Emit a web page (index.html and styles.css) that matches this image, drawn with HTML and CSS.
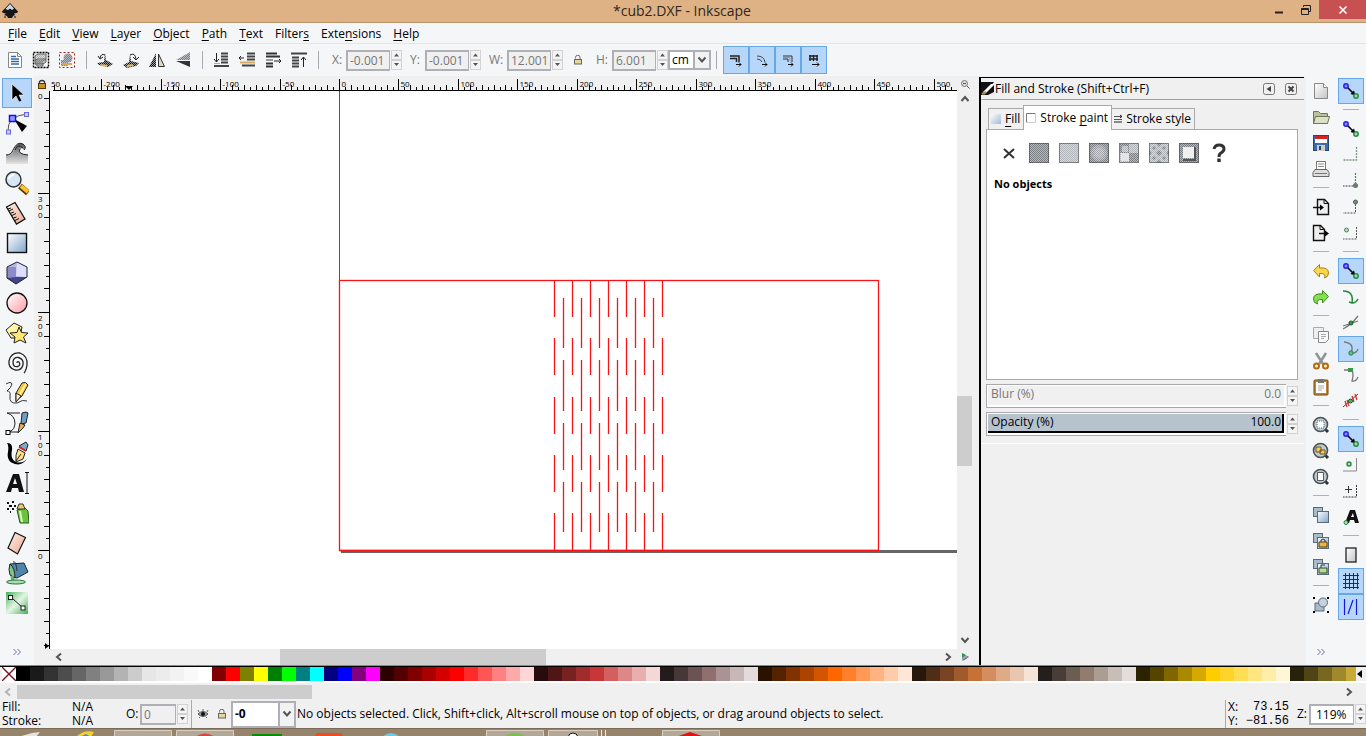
FILE: index.html
```html
<!DOCTYPE html>
<html lang="en">
<head>
<meta charset="utf-8">
<title>*cub2.DXF - Inkscape</title>
<link rel="stylesheet" href="styles.css">
</head>
<body>
<svg class="defs" aria-hidden="true">
  <defs>
    <linearGradient id="gBlue" x1="0" y1="0" x2="1" y2="1"><stop offset="0" stop-color="#fff"/><stop offset="1" stop-color="#7fa5cc"/></linearGradient>
    <linearGradient id="gPink" x1="0" y1="0" x2="1" y2="1"><stop offset="0" stop-color="#fff"/><stop offset="1" stop-color="#ff9ba5"/></linearGradient>
    <linearGradient id="gPeach" x1="0" y1="0" x2="1" y2="1"><stop offset="0" stop-color="#fff0ea"/><stop offset="1" stop-color="#eba98f"/></linearGradient>
    <linearGradient id="gGreen" x1="0" y1="0" x2="1" y2="1"><stop offset="0" stop-color="#46b05a"/><stop offset=".5" stop-color="#e4f5e6"/><stop offset="1" stop-color="#46b05a"/></linearGradient>
    <linearGradient id="gGray" x1="0" y1="0" x2="0" y2="1"><stop offset="0" stop-color="#555"/><stop offset="1" stop-color="#e4e4e4"/></linearGradient>
    <linearGradient id="gPage" x1="0" y1="0" x2="1" y2="1"><stop offset="0" stop-color="#fff"/><stop offset="1" stop-color="#c4c4c4"/></linearGradient>
    <pattern id="dither" width="2" height="2" patternUnits="userSpaceOnUse"><rect width="2" height="2" fill="#b4b9be"/><rect width="1" height="1" fill="#7c8085"/><rect x="1" y="1" width="1" height="1" fill="#7c8085"/></pattern>
    <pattern id="ditherLight" width="2" height="2" patternUnits="userSpaceOnUse"><rect width="2" height="2" fill="#dadada"/><rect width="1" height="1" fill="#b0b4b8"/><rect x="1" y="1" width="1" height="1" fill="#b0b4b8"/></pattern>
    <pattern id="bars" width="2" height="2" patternUnits="userSpaceOnUse"><rect width="2" height="2" fill="#999"/><rect width="1" height="1" fill="#111"/><rect x="1" y="1" width="1" height="1" fill="#222"/></pattern>
    <symbol id="nodes" viewBox="0 0 18 18"><path d="M5 5l7 7" stroke="#000" stroke-width="1.6"/><path d="M13.500 13.500l-5-1.500 3.500-3.500z"/><circle cx="4" cy="4" r="2.200" fill="#8c8cff" stroke="#2222ee" stroke-width="1.500"/><circle cx="14" cy="14" r="2.200" fill="#9fd8b4" stroke="#2c8a44" stroke-width="1.500"/></symbol>
    <symbol id="lens" viewBox="0 0 18 18"><path d="M12 12l4 4" stroke="#333" stroke-width="3"/><circle cx="8.500" cy="8.500" r="7" fill="#bccbd6" stroke="#4b5257" stroke-width="1.600"/></symbol>
    <symbol id="padlock" viewBox="0 0 10 10"><path d="M2.500 3.500V2.500a2 2 0 0 1 4.500 0V5" fill="none" stroke="#666"/><rect x="1.500" y="4.500" width="7" height="4.500" fill="#e6d79a" stroke="#666"/></symbol>
    <symbol id="spin" viewBox="0 0 11 20"><rect x=".5" y=".5" width="10" height="9" fill="#f4f4f4" stroke="#d2d2d2"/><rect x=".5" y="10.500" width="10" height="9" fill="#f4f4f4" stroke="#d2d2d2"/><path d="M3 6.500h5L5.500 3.500zM3 13h5l-2.500 3z" fill="#555"/></symbol>
    <symbol id="clones" viewBox="0 0 18 18"><rect x="1.500" y="1.500" width="9" height="9" fill="#a9bccb" stroke="#596a78"/><rect x="5.500" y="5.500" width="11" height="11" fill="url(#gBlue)" stroke="#596a78"/></symbol>
    <symbol id="stroked" viewBox="0 0 14 14"><path d="M1 3h9v6M1 5.500h6.500V9" fill="none" stroke="#222" stroke-width="1.500"/><path d="M7 11.500h5M10 9.500l2 2-2 2" fill="none" stroke="#111"/></symbol>
  </defs>
</svg>
<div class="window">
  <header class="titlebar">
    <svg class="logo" width="18" height="18" viewBox="0 0 18 18"><path d="M9 1L17 9.500Q17 11 13 11.500L14 13l-2 1-1 2H7l-1-2-3-1 2-1.500Q1 11 1 9.500z" fill="#15171c"/><path d="M9 2l4 4.500-2 1.500-2-1.500L7 8 4.500 7z" fill="#cfd9e6"/><path d="M3 15h2M13 15h2" stroke="#111"/></svg>
    <h1>*cub2.DXF - Inkscape</h1>
    <div class="winctl">
      <button aria-label="Minimize"><svg width="10" height="10"><path d="M1 7.500h8" stroke="#222" stroke-width="2"/></svg></button>
      <button aria-label="Restore"><svg width="12" height="12"><path d="M3.500 3V1.500h7v6H9M1.500 4.500h7v6h-7zM1.500 5.500h7" fill="none" stroke="#222"/></svg></button>
      <button class="close" aria-label="Close"><svg width="10" height="10"><path d="M1.500 1.500l7 7M8.500 1.500l-7 7" stroke="#fff" stroke-width="1.600"/></svg></button>
    </div>
  </header>
  <nav class="menubar">
    <a href="#"><u>F</u>ile</a><a href="#"><u>E</u>dit</a><a href="#"><u>V</u>iew</a><a href="#"><u>L</u>ayer</a><a href="#"><u>O</u>bject</a><a href="#"><u>P</u>ath</a><a href="#"><u>T</u>ext</a><a href="#">Filter<u>s</u></a><a href="#">Exte<u>n</u>sions</a><a href="#"><u>H</u>elp</a>
  </nav>
  <div class="toolbar">
    <div class="group">
      <button aria-label="Select all"><svg width="18" height="18"><path d="M2.500 1.500h9l4 4v11h-13z" fill="#fff" stroke="#888"/><path d="M5 5.500h5M5 8h8M5 10.500h8M5 13h8" stroke="#3568a8" stroke-width="1.500"/><path d="M11.500 1.500v4h4" fill="none" stroke="#888"/></svg></button>
      <button aria-label="Select all in all layers"><svg width="18" height="18"><rect x="1.500" y="1.500" width="15" height="15" fill="none" stroke="#000" stroke-width="1.400" stroke-dasharray="2 1"/><path d="M3 5l3-2h8v5l-3 2H3zM3 9l3-1h8v3l-3 2H3zM3 12h8v3H5z" fill="url(#ditherLight)" stroke="#666"/></svg></button>
      <button aria-label="Deselect"><svg width="18" height="18"><rect x="1.500" y="1.500" width="15" height="15" fill="none" stroke="#a02020" stroke-dasharray="2 2"/><circle cx="10" cy="7" r="4.500" fill="url(#dither)"/><path d="M3 9h7v6H3z" fill="url(#dither)"/><path d="M4 13h10" stroke="#dca850" stroke-width="2"/></svg></button>
    </div><i class="sep"></i>
    <div class="group">
      <button aria-label="Rotate left"><svg width="18" height="18"><path d="M9 2l1 7 7 4-5 3-9-2-2-2 7-1z" fill="url(#bars)"/><path d="M5 14l6 1" stroke="#dfba60" stroke-width="2"/><path d="M9 4Q5 2 4 7M2 5l2 3 3-2" fill="none" stroke="#222"/></svg></button>
      <button aria-label="Rotate right"><svg width="18" height="18"><path d="M8 3l1 7 8 2-3 3-9 2-4-3 6-3z" fill="url(#bars)"/><path d="M5 15l6-1" stroke="#dfba60" stroke-width="2"/><path d="M8 4q5-3 6 4m-3-2l3 3 3-3" fill="none" stroke="#222"/></svg></button>
      <button aria-label="Flip horizontal"><svg width="18" height="18"><path d="M8 2v14H1z" fill="url(#bars)"/><path d="M10.500 3v12.500h6z" fill="#e4d8bc" stroke="#333"/></svg></button>
      <button aria-label="Flip vertical"><svg width="18" height="18"><path d="M16 1v8H2z" fill="url(#dither)"/><path d="M16 16v-6H2z" fill="#333"/></svg></button>
    </div><i class="sep"></i>
    <div class="group">
      <button aria-label="Lower to bottom"><svg width="18" height="18"><path d="M9 2.500h7M9 5.500h7M9 8.500h7M9 11.500h7M2 15h15" stroke="#444" stroke-width="2"/><path d="M2 12.500h6" stroke="#aaa"/><path d="M4.500 2v9m-2.500-3l2.500 3 2.500-3" fill="none" stroke="#222"/></svg></button>
      <button aria-label="Lower"><svg width="18" height="18"><path d="M9 2.500h8M9 5.500h8M4 14.500h13M9 8.500h8" stroke="#444" stroke-width="2"/><path d="M2 11.500h15" stroke="#dba85c" stroke-width="2"/><path d="M6 7H1l2-2M1 7l2 2" fill="none" stroke="#222"/></svg></button>
      <button aria-label="Raise"><svg width="18" height="18"><path d="M2 2.500h11M2 5.500h14M2 12.500h7M2 15.500h7" stroke="#333" stroke-width="2"/><path d="M2 9h7" stroke="#999" stroke-width="2"/><path d="M10 10h7m-2-2l2 2-2 2" fill="none" stroke="#222"/></svg></button>
      <button aria-label="Raise to top"><svg width="18" height="18"><path d="M1 2.500h16M2 6.500h7M2 9.500h7M2 12.500h7M2 15.500h7" stroke="#444" stroke-width="2"/><path d="M13.500 16V6M11 9l2.500-3L16 9" fill="none" stroke="#222"/></svg></button>
    </div><i class="sep"></i>
    <div class="fields">
      <div class="field"><label for="fx">X:</label><input id="fx" value="-0.001" disabled><svg width="11" height="20"><use href="#spin"/></svg></div>
      <div class="field"><label for="fy">Y:</label><input id="fy" value="-0.001" disabled><svg width="11" height="20"><use href="#spin"/></svg></div>
      <div class="field"><label for="fw">W:</label><input id="fw" value="12.001" disabled><svg width="11" height="20"><use href="#spin"/></svg></div>
      <button class="lock" aria-label="Lock ratio"><svg width="10" height="10"><use href="#padlock"/></svg></button>
      <div class="field"><label for="fh">H:</label><input id="fh" value="6.001" disabled><svg width="11" height="20"><use href="#spin"/></svg></div>
    </div>
    <div class="select unit"><select aria-label="Unit"><option>cm</option></select><span class="arrow"><svg width="10" height="8"><path d="M1.500 1.500L5 5.500l3.500-4" fill="none" stroke="#555" stroke-width="2"/></svg></span></div>
    <i class="sep tight"></i>
    <div class="toggles">
      <button aria-label="Scale stroke width"><svg width="14" height="14"><use href="#stroked"/></svg></button>
      <button aria-label="Scale corners"><svg width="14" height="14"><path d="M2 3q7 0 8 6M2 6q4 0 5 3" fill="none" stroke="#444"/><path d="M7 11.500h5M10 9.500l2 2-2 2" fill="none" stroke="#111"/></svg></button>
      <button aria-label="Move gradients"><svg width="14" height="14"><path d="M2 3h9v6M2 6h5v3" fill="none" stroke="#333"/><path d="M2 4.500h7v4" fill="none" stroke="#999"/><path d="M7 11.500h5M10 9.500l2 2-2 2" fill="none" stroke="#111"/></svg></button>
      <button aria-label="Move patterns"><svg width="14" height="14"><path d="M2 3h9M2 6h9M3 2v6M6.500 2v6M10 2v6" stroke="#222" stroke-width="1.400"/><path d="M5 11.500h7M10 9.500l2 2-2 2" fill="none" stroke="#111"/></svg></button>
    </div>
  </div>

  <main class="work">
    <div class="toolbox">
      <button class="on" aria-label="Select"><svg width="24" height="24"><path d="M7 3v16l4-4 3 6 3-1-3-6h5z" stroke="#fff" stroke-width=".6"/></svg></button>
      <button aria-label="Edit nodes"><svg width="24" height="24"><path d="M3 20Q2 5 22 3" fill="none" stroke="#555"/><path d="M9 8l13 7-5 6z"/><rect x="4.500" y="4.500" width="6" height="6" fill="#99f" stroke="#11e" stroke-width="1.500"/><rect x="19.500" y="1.500" width="4" height="4" fill="#ccf" stroke="#66d"/><rect x="1.500" y="19" width="4" height="4" fill="#ccf" stroke="#66d"/></svg></button>
      <button aria-label="Tweak"><svg width="24" height="24"><path d="M1 14q6 0 8-5 3-9 9-6 4 3 1 6-1-3-4-1-3 5 8 6v9H1z" fill="url(#gGray)"/><path d="M1 14q5 0 7-5 4-9 10-6 4 3 1 6M15 8q-3 5 8 6M10 9q3-7 8-2" fill="none" stroke="#222"/></svg></button>
      <button aria-label="Zoom"><svg width="24" height="24"><path d="M15 15l8 7" stroke="#573600" stroke-width="6"/><path d="M16 15l7 6" stroke="#ffc32c" stroke-width="4"/><circle cx="8.500" cy="8.500" r="7.500" fill="#d6e6f5" stroke="#333" stroke-width="1.500"/><path d="M4 8q1-4 5-4" stroke="#fff" stroke-width="2" fill="none"/></svg></button>
      <button aria-label="Measure"><svg width="24" height="24"><path d="M1.500 6L10 1.500 20 18l-8.500 5z" fill="url(#gPeach)" stroke="#111" stroke-width="1.300"/><path d="M3 8l3-1M4 10l4-2M6 12l3-1M7 14.500l4-2M8.500 17l3-1M10 19.500l4-2" stroke="#111"/></svg></button>
      <button aria-label="Rectangle"><svg width="24" height="24"><rect x="2.500" y="2.500" width="19" height="19" fill="url(#gBlue)" stroke="#111" stroke-width="1.400"/></svg></button>
      <button aria-label="3D box"><svg width="24" height="24"><path d="M2 6l10-5 10 5v10l-11 7-9-6z" fill="#b7b7e8"/><path d="M2 6l9 0v17l-9-6z" fill="#8c8ccc"/><path d="M11 16l11 0-11 7-9-6z" fill="#434390"/><path d="M12 1l10 5v10l-11-1z" fill="#dedefa"/><path d="M2 6l10-5 10 5v10l-11 7-9-6z" fill="none" stroke="#223"/></svg></button>
      <button aria-label="Ellipse"><svg width="24" height="24"><circle cx="12" cy="12" r="10" fill="url(#gPink)" stroke="#111" stroke-width="1.300"/></svg></button>
      <button aria-label="Star"><svg width="24" height="24"><path d="M1 9l8-7 8 4-2 11H6z" fill="#fff4a8" stroke="#222"/><path d="M14 6l2.500 5.500L23 12l-4.500 4L21 22l-6-3-6 3 1-6-5-4 7-.5z" fill="#ffe873" stroke="#222"/></svg></button>
      <button aria-label="Spiral"><svg width="24" height="24"><path d="M12 12q0-2 2-1 2 3-1 4.500-5 1-5-4Q8 6 13.500 6.500 19 8 18 14q-2 6-8 5Q3 17 4 10 6 1 15 2q8 3 7 12-1 6-3 8" fill="none" stroke="#222" stroke-width="1.300"/></svg></button>
      <button aria-label="Pencil"><svg width="24" height="24"><path d="M1 3q5-3 6 0-1 4-5 7 4 0 3 5-1 8 7 7 6-4 10-2" fill="none" stroke="#333"/><path d="M11 20l0-8 6-10q4-2 6 2l-6 11z" fill="#ffc735" stroke="#222"/><path d="M11 12l5 3-5 6z" fill="#fff1cf" stroke="#222"/><path d="M15 13l6-10" stroke="#fff2a6" stroke-width="2"/></svg></button>
      <button aria-label="Bezier"><svg width="24" height="24"><path d="M2 2h13M2 2q8 2 8 11 0 5-5 8h8" fill="none" stroke="#222"/><rect x="1" y="19.500" width="4" height="4" fill="#fff" stroke="#000"/><path d="M17 2q5-2 6 0l-2 10-5 1z" fill="#6d9fc4" stroke="#222"/><path d="M15 12l5 2-2 3-5 5z" fill="#e8b050" stroke="#222"/></svg></button>
      <button aria-label="Calligraphy"><svg width="24" height="24"><path d="M2 2q6 0 5 7-2 9 4 12 6 2 11-3-5 7-12 5Q1 21 3 11 4 4 2 2z"/><path d="M14 5l7-4 2 3-2 6z" fill="#7fa9c8" stroke="#222"/><path d="M14 6l7 4" stroke="#d22" stroke-width="2"/><path d="M13 8l7 4-2 6-7 3q-1-7 2-13z" fill="#ffe08a" stroke="#222"/><path d="M11 20l5-7" stroke="#222"/></svg></button>
      <button aria-label="Text"><svg width="24" height="24"><path d="M1 21L8 3h6l5 18h-5l-1-4H7l-1 4zM8 13h4l-2-6z" fill="#111" fill-rule="evenodd"/><path d="M20 1.500h4M20 22.500h4M22 2v20" stroke="#111"/></svg></button>
      <button aria-label="Spray"><svg width="24" height="24"><path d="M12 9l8-2 3 3 1 12-9 0z" fill="#6cc13e" stroke="#2c5520"/><path d="M15 10l2 11" stroke="#d4ffc0" stroke-width="2"/><path d="M12 8l2-5h4l2 5z" fill="#e9cc68" stroke="#333"/><path d="M2 2h2M7 1h2M4 5h3M9 5h2M2 8h2M7 8h2M5 11h1" stroke="#111" stroke-width="2"/></svg></button>
      <button aria-label="Eraser"><svg width="24" height="24"><path d="M10 1.500l10.500 5L12.500 23 3 17z" fill="url(#gPeach)" stroke="#111" stroke-width="1.200"/></svg></button>
      <button aria-label="Fill bucket"><svg width="24" height="24"><path d="M5 3l14-1 4 9-11 6-5-1z" fill="#4f86b0" stroke="#222"/><path d="M5 3q5 4 5 14L5 14q-2-6 0-11z" fill="#7fc48a" stroke="#222"/><path d="M8 1q3-2 4 9" fill="none" stroke="#333"/><path d="M7 15q0 4 2 5" stroke="#64b070" stroke-width="3" fill="none"/><ellipse cx="11" cy="21" rx="9.500" ry="2" fill="#a5dfae" stroke="#2c7039"/></svg></button>
      <button aria-label="Gradient"><svg width="24" height="24"><rect x="1" y="1" width="22" height="22" fill="url(#gGreen)"/><path d="M7 7l11 10" stroke="#222"/><rect x="3.500" y="4.500" width="4" height="4" fill="#fff" stroke="#222"/><rect x="16" y="15" width="4" height="4" fill="#fff" stroke="#222"/></svg></button>
      <button class="more" aria-label="More tools"><svg width="10" height="8"><path d="M1.500 1l3 3-3 3M5.500 1l3 3-3 3" fill="none" stroke="#6c6cb0"/></svg></button>
    </div>

    <section class="editor">
      <div class="corner"><svg width="10" height="10"><path d="M2.500 5V2.500q2.500-2 5 0V5" fill="none" stroke="#333" stroke-width="1.300"/><rect x="1.500" y="4.500" width="7" height="5" fill="#c59328" stroke="#543a00"/></svg></div>
      <svg class="hruler" id="hruler"></svg>
      <div class="corner"><svg width="10" height="10"><circle cx="4.500" cy="4.500" r="3" fill="#ddd" stroke="#777"/><path d="M3 4.500h3M7 7l2.500 2.500" stroke="#555"/></svg></div>
      <svg class="vruler" id="vruler"></svg>
      <svg class="canvas" id="canvas" role="img" aria-label="Drawing"></svg>
      <div class="vscroll">
        <svg width="10" height="8"><path d="M1.500 6L5 2l3.500 4" fill="none" stroke="#555" stroke-width="2"/></svg>
        <div class="track"><i></i><b></b><i class="after"></i></div>
        <svg width="10" height="8"><path d="M1.500 2L5 6l3.500-4" fill="none" stroke="#555" stroke-width="2"/></svg>
      </div>
      <div></div>
      <div class="hscroll">
        <svg width="8" height="10"><path d="M6 1.500L2 5l4 3.500" fill="none" stroke="#555" stroke-width="2"/></svg>
        <div class="track"><i></i><b></b><i class="after"></i></div>
        <svg width="8" height="10"><path d="M2 1.500L6 5 2 8.500" fill="none" stroke="#555" stroke-width="2"/></svg>
      </div>
      <div class="corner"><svg width="10" height="10"><path d="M2 1l7 4-7 4z" fill="#9aa"/><path d="M2 1l4 2-4 3z" fill="#2a9a50"/><path d="M3 8l4-2" stroke="#84b"/><path d="M7 4l2 1-2 1" fill="#c55"/></svg></div>
    </section>

    <aside class="dock">
      <div class="dockhead">
        <svg width="14" height="14"><path d="M0 0h13L3 13H0z" fill="#111"/><path d="M2 10L10 2l3 0-8 9z" fill="#fff"/><path d="M3 13l10-10v7l-6 3z" fill="#111"/><path d="M1 12l4-2" stroke="#b98d42" stroke-width="2"/></svg>
        <h2>Fill and Stroke (Shift+Ctrl+F)</h2>
        <button aria-label="Iconify"><svg width="12" height="12"><rect x=".5" y=".5" width="11" height="11" rx="2" fill="none" stroke="#777"/><path d="M8 3v6L3.500 6z" fill="#444"/></svg></button>
        <button aria-label="Close dialog"><svg width="12" height="12"><rect x=".5" y=".5" width="11" height="11" rx="2" fill="none" stroke="#777"/><path d="M3.500 3.500l5 5M8.500 3.500l-5 5" stroke="#444" stroke-width="2"/></svg></button>
      </div>
      <div class="dockbody">
        <div class="tabs" role="tablist">
          <button role="tab"><svg width="10" height="10"><rect width="10" height="10" fill="url(#gBlue)" opacity=".7"/></svg><span><u>F</u>ill</span></button>
          <button role="tab" class="active" aria-selected="true"><svg width="10" height="10"><path d="M.5 9.500v-9h9" fill="none" stroke="#777"/><path d="M.5 9.500h9v-9" fill="none" stroke="#ccc"/></svg><span>Stroke <u>p</u>aint</span></button>
          <button role="tab"><svg width="10" height="10"><path d="M1 2.500h8M1 5.500h8" stroke="#555"/><path d="M1 8h8" stroke="#222"/><path d="M7 1l2 1.500L7 4" stroke="#222" fill="none"/></svg><span>Stroke style</span></button>
        </div>
        <div class="panel">
          <div class="paints">
            <button aria-label="No paint"><svg width="20" height="20"><path d="M5 6l10 9M15 6L5 15" stroke="#333" stroke-width="2"/></svg></button>
            <button aria-label="Flat color"><svg width="20" height="20"><rect width="20" height="20" fill="url(#dither)"/><rect x=".5" y=".5" width="19" height="19" fill="none" stroke="#333" stroke-dasharray="1 1"/></svg></button>
            <button aria-label="Linear gradient"><svg width="20" height="20"><rect width="20" height="20" fill="url(#ditherLight)"/><rect x=".5" y=".5" width="19" height="19" fill="none" stroke="#333" stroke-dasharray="1 1"/></svg></button>
            <button aria-label="Radial gradient"><svg width="20" height="20"><rect width="20" height="20" fill="url(#dither)"/><circle cx="10" cy="10" r="8" fill="url(#ditherLight)" opacity=".5"/><circle cx="10" cy="10" r="5" fill="url(#ditherLight)" opacity=".6"/><rect x=".5" y=".5" width="19" height="19" fill="none" stroke="#333" stroke-dasharray="1 1"/></svg></button>
            <button aria-label="Mesh gradient"><svg width="20" height="20"><rect width="20" height="20" fill="url(#ditherLight)"/><path d="M10 10h9v9h-9zM1 1h9v9H1z" fill="url(#dither)"/><path d="M3 3h6v6H3z" fill="url(#ditherLight)"/><path d="M2 10h8v8H2z" fill="#e4e4e4"/><rect x=".5" y=".5" width="19" height="19" fill="none" stroke="#333" stroke-dasharray="1 1"/></svg></button>
            <button aria-label="Pattern"><svg width="20" height="20"><rect width="20" height="20" fill="url(#ditherLight)"/><path d="M0 7l3 3-3 3zM7 0h6l-3 4zM10 7l3 3-3 3-3-3zM20 7l-3 3 3 3zM7 20l3-4 3 4zM3 5l2-2 2 2-2 2zM13 5l2-2 2 2-2 2zM3 15l2-2 2 2-2 2zM13 15l2-2 2 2-2 2z" fill="url(#dither)"/><rect x=".5" y=".5" width="19" height="19" fill="none" stroke="#333" stroke-dasharray="1 1"/></svg></button>
            <button aria-label="Swatch"><svg width="20" height="20"><rect width="20" height="20" fill="url(#dither)"/><path d="M16 4v13H4" fill="none" stroke="#555" stroke-width="2"/><rect x="4" y="4" width="11" height="11" fill="#f0f0f0"/><rect x=".5" y=".5" width="19" height="19" fill="none" stroke="#333" stroke-dasharray="1 1"/></svg></button>
            <button aria-label="Unset paint"><svg width="20" height="20"><path d="M5 6q1-4 5-4 5 0 5 4 0 2-3 4-2 1-2 4" fill="none" stroke="#333" stroke-width="3"/><path d="M10 15.500v3.500" stroke="#333" stroke-width="3.500"/></svg></button>
          </div>
          <strong>No objects</strong>
        </div>
        <div class="slide off"><div class="box"><div class="bar"><label for="blur">Blur (%)</label><input id="blur" value="0.0" disabled></div></div><svg width="11" height="20"><use href="#spin"/></svg></div>
        <div class="slide"><div class="box"><div class="bar"><label for="opac">Opacity (%)</label><input id="opac" value="100.0"></div></div><svg width="11" height="20"><use href="#spin"/></svg></div>
      </div>
    </aside>

    <div class="strip commands">
      <button aria-label="New"><svg width="18" height="18"><path d="M2.500 1.500h9l4 4v11h-13z" fill="url(#gPage)" stroke="#888"/><path d="M11.500 1.500v4h4" fill="#fff" stroke="#888"/></svg></button>
      <button aria-label="Open"><svg width="18" height="18"><path d="M1.500 3.500h5l2 2h7v10h-14z" fill="#b9c09b" stroke="#6f7755"/><path d="M3.500 8.500h14l-2 7h-14z" fill="#dce1c5" stroke="#6f7755"/></svg></button>
      <button aria-label="Save"><svg width="18" height="18"><rect x="1.500" y="1.500" width="15" height="15" fill="#3c6cab" stroke="#24466f"/><path d="M3 2h12v7H3z" fill="#fff"/><path d="M3 2h12v3H3z" fill="#d82020"/><path d="M5 11h8v6H5z" fill="#ccc"/><path d="M7 12h2v4H7z" fill="#345"/></svg></button>
      <button aria-label="Print"><svg width="18" height="18"><path d="M4.500 1.500h9v8h-9z" fill="#fff" stroke="#777"/><path d="M6 4h6M6 6.500h6" stroke="#888"/><path d="M3 9.500h12l2 3v4H1v-4z" fill="#ddd" stroke="#666"/><path d="M3 13.500h12" stroke="#777"/></svg></button>
      <i class="rule"></i>
      <button aria-label="Import"><svg width="18" height="18"><path d="M5.500 1.500h7l4 4v11h-11z" fill="#eee" stroke="#111" stroke-width="1.400"/><path d="M12 1.500v4h4" fill="none" stroke="#111"/><path d="M1 9.500h9" stroke="#111" stroke-width="1.500"/><path d="M8 6.500l4 3-4 3z"/></svg></button>
      <button aria-label="Export"><svg width="18" height="18"><path d="M1.500 1.500h7l4 4v11h-11z" fill="#eee" stroke="#111" stroke-width="1.400"/><path d="M8 1.500v4h4" fill="none" stroke="#111"/><path d="M7 9.500h8" stroke="#111" stroke-width="1.500"/><path d="M13 6.500l4 3-4 3z"/></svg></button>
      <i class="rule"></i>
      <button aria-label="Undo"><svg width="18" height="18"><path d="M1.500 8.500l6-6v3.500q9-1 9 5 0 4-4 5 2-5-5-4.500V15z" fill="#f6d64a" stroke="#a98310"/></svg></button>
      <button aria-label="Redo"><svg width="18" height="18"><path d="M16.500 8.500l-6-6v3.500q-9-1-9 5 0 4 4 5-2-5 5-4.500V15z" fill="#84e04a" stroke="#3b8c22"/></svg></button>
      <i class="rule"></i>
      <button aria-label="Copy"><svg width="18" height="18"><path d="M1.500 1.500h10v11h-10z" fill="#eee" stroke="#aaa"/><path d="M6.500 5.500h10v8l-3 3h-7z" fill="#fafafa" stroke="#888"/><path d="M9 8.500h5M9 10.500h5M9 12.500h3" stroke="#aaa"/></svg></button>
      <button aria-label="Cut"><svg width="18" height="18"><path d="M4 1l7 11M14 1L7 12" stroke="#8d9590" stroke-width="2.500"/><circle cx="4.500" cy="14" r="2.500" fill="#fff0c8" stroke="#b06b12" stroke-width="2"/><circle cx="13.500" cy="14" r="2.500" fill="#fff0c8" stroke="#b06b12" stroke-width="2"/></svg></button>
      <button aria-label="Paste"><svg width="18" height="18"><rect x="2" y="2" width="14" height="15" rx="1" fill="#c28434" stroke="#75480f"/><path d="M4 4h10v11H4z" fill="#fff"/><path d="M6 1h6v4H6z" fill="#777"/><path d="M6 8h6M6 10h6M6 12h4" stroke="#aaa"/></svg></button>
      <i class="rule"></i>
      <button aria-label="Zoom selection"><svg width="18" height="18"><use href="#lens"/><rect x="5" y="5" width="7" height="7" fill="#fff" stroke="#666" stroke-dasharray="1 1"/></svg></button>
      <button aria-label="Zoom drawing"><svg width="18" height="18"><use href="#lens"/><path d="M4 5h5v5H4zM8 8h5v4H8z" fill="#f3cb64" stroke="#72551a"/></svg></button>
      <button aria-label="Zoom page"><svg width="18" height="18"><use href="#lens"/><path d="M5.500 4.500h6v8h-6z" fill="#fff" stroke="#555"/></svg></button>
      <i class="rule"></i>
      <button aria-label="Duplicate"><svg width="18" height="18"><use href="#clones"/></svg></button>
      <button aria-label="Clone"><svg width="18" height="18"><use href="#clones"/><path d="M9 10V8q2-2 4 0v2" fill="none" stroke="#333"/><path d="M7 10h8v5H7z" fill="#e9b64a" stroke="#5b4010"/></svg></button>
      <button aria-label="Unlink clone"><svg width="18" height="18"><use href="#clones"/><path d="M9 10V7h4" fill="none" stroke="#333"/><path d="M7 10h8v5H7z" fill="#b9dba0" stroke="#335520"/></svg></button>
      <i class="rule"></i>
      <button aria-label="Group"><svg width="18" height="18"><path d="M3 7h9v8H3z" fill="#a9bccb" stroke="#596a78"/><circle cx="11" cy="6.500" r="4.500" fill="#c3d2de" stroke="#596a78"/><path d="M1 1h2v2H1zM15 1h2v2h-2zM1 15h2v2H1zM15 15h2v2h-2z"/></svg></button>
      <button class="more" aria-label="More commands"><svg width="10" height="8"><path d="M1.500 1l3 3-3 3M5.500 1l3 3-3 3" fill="none" stroke="#6c6cb0"/></svg></button>
    </div>

    <div class="strip snaps">
      <button class="on" aria-label="Enable snapping"><svg width="18" height="18"><use href="#nodes"/></svg></button>
      <i class="rule"></i>
      <button aria-label="Snap bounding boxes"><svg width="18" height="18"><use href="#nodes"/></svg></button>
      <button aria-label="Snap edges"><svg width="18" height="18"><path d="M14.500 1v13H1" fill="none" stroke="#7d997f" stroke-width="1.300" stroke-dasharray="2 1"/></svg></button>
      <button aria-label="Snap corners"><svg width="18" height="18"><path d="M13.500 1v13H1" fill="none" stroke="#777" stroke-width="1.300" stroke-dasharray="2 1"/><circle cx="13.500" cy="13.500" r="2.500" fill="#687c6a"/></svg></button>
      <button aria-label="Snap edge midpoints"><svg width="18" height="18"><path d="M13.500 3v12H1" fill="none" stroke="#555" stroke-dasharray="2 1"/><circle cx="13.500" cy="4" r="2" fill="#6e9874" stroke="#555"/></svg></button>
      <button aria-label="Snap box centers"><svg width="18" height="18"><path d="M14.500 3v12H1" fill="none" stroke="#555" stroke-dasharray="2 1"/><circle cx="4.500" cy="6" r="2" fill="#bcd9c0" stroke="#577c5d"/></svg></button>
      <i class="rule"></i>
      <button class="on" aria-label="Snap nodes"><svg width="18" height="18"><use href="#nodes"/></svg></button>
      <button aria-label="Snap to paths"><svg width="18" height="18"><path d="M1 3q11 0 9 12 4 0 6-4M10 15l-3-1" fill="none" stroke="#238838" stroke-width="1.500"/></svg></button>
      <button aria-label="Snap intersections"><svg width="18" height="18"><path d="M1 15q8-4 15-13M1 12l15-5" fill="none" stroke="#777" stroke-width="1.300"/><circle cx="9" cy="9" r="2" fill="#379b45" stroke="#145c26"/></svg></button>
      <button class="on" aria-label="Snap cusp nodes"><svg width="18" height="18"><path d="M2 2q11 1 7 11 5 1 7-4" fill="none" stroke="#777" stroke-width="1.400"/><circle cx="9" cy="13" r="2.200" fill="#62be92" stroke="#218342"/></svg></button>
      <button aria-label="Snap smooth nodes"><svg width="18" height="18"><path d="M2 4h8q2 4 0 11 4 1 6-4" fill="none" stroke="#777" stroke-width="1.300"/><rect x="6" y="2" width="5" height="4" fill="#379b45"/></svg></button>
      <button aria-label="Snap line midpoints"><svg width="18" height="18"><path d="M1 15L16 2" stroke="#a22"/><path d="M3 9l2 6M5 8l2 6M10 4l2 6M13 2l2 6" stroke="#c33" stroke-width="1.300"/><circle cx="8.500" cy="9" r="2" fill="#57b567" stroke="#145c26"/></svg></button>
      <i class="rule"></i>
      <button class="on" aria-label="Snap others"><svg width="18" height="18"><use href="#nodes"/></svg></button>
      <button aria-label="Snap object centers"><svg width="18" height="18"><path d="M14.500 2v13H1" fill="none" stroke="#888"/><circle cx="7" cy="8" r="2" fill="#bce3c0" stroke="#248436" stroke-width="1.400"/></svg></button>
      <button aria-label="Snap rotation centers"><svg width="18" height="18"><path d="M14.500 3v12H1" fill="none" stroke="#333" stroke-dasharray="2 1"/><path d="M3 7.500h7M6.500 4v7" stroke="#333"/></svg></button>
      <button aria-label="Snap text baselines"><svg width="18" height="18"><path d="M3 15L8 2h5l4 13h-4l-1-3H8l-1 3zM9 9h3l-1-4z" fill="#111" fill-rule="evenodd"/><circle cx="4" cy="14.500" r="2" fill="#a6dcb2" stroke="#218342"/></svg></button>
      <i class="rule"></i>
      <button aria-label="Snap page border"><svg width="18" height="18"><rect x="4" y="2" width="10" height="14" fill="url(#gPage)" stroke="#222" stroke-width="1.300"/></svg></button>
      <button class="on" aria-label="Snap grids"><svg width="18" height="18"><path d="M1 3.500h16M1 7.500h16M1 11.500h16M1 15.500h16M3.500 1v16M7.500 1v16M11.500 1v16M15.500 1v16" stroke="#1717dd"/></svg></button>
      <button class="on" aria-label="Snap guides"><svg width="18" height="18"><path d="M2.500 1v16M14.500 1v16M6 16l5-14" stroke="#1717dd" stroke-width="1.200"/></svg></button>
    </div>
  </main>

  <footer class="bottom">
    <div class="palette"><button class="none" aria-label="None"><svg width="14" height="14"><rect width="14" height="14" fill="#fff"/><path d="M0 0l14 14M14 0L0 14" stroke="#7a1020" stroke-width="1.400"/></svg></button><div class="swatches" id="swatches"></div><svg width="8" height="10"><path d="M6 1v8L1 5z"/></svg></div>
    <div class="palscroll">
      <svg width="8" height="10"><path d="M6 1.500L2 5l4 3.500" fill="none" stroke="#b4b4b4" stroke-width="2"/></svg>
      <div class="track"><b></b></div>
      <svg width="8" height="10"><path d="M2 1.500L6 5 2 8.500" fill="none" stroke="#555" stroke-width="2"/></svg>
    </div>
    <div class="status">
      <dl class="style"><dt>Fill:</dt><dd>N/A</dd><dt>Stroke:</dt><dd>N/A</dd></dl>
      <div class="field small"><label for="fo">O:</label><input id="fo" value="0" disabled><svg width="11" height="20"><use href="#spin"/></svg></div>
      <i class="divider"></i>
      <button aria-label="Layer visibility"><svg width="12" height="10"><path d="M1 5q5-5 10 0-5 5-10 0z" fill="#999" stroke="#555"/><circle cx="6" cy="5" r="2" fill="#111"/><path d="M2 3L1 1M6 2V0M10 3l1-2M3 8l-1 1M9 8l1 1" stroke="#666"/></svg></button>
      <button aria-label="Layer lock"><svg width="10" height="10"><use href="#padlock"/></svg></button>
      <div class="select layer"><select aria-label="Layer"><option>-0</option></select><span class="arrow"><svg width="10" height="8"><path d="M1.500 1.500L5 5.500l3.500-4" fill="none" stroke="#555" stroke-width="2"/></svg></span></div>
      <p>No objects selected. Click, Shift+click, Alt+scroll mouse on top of objects, or drag around objects to select.</p>
      <i class="divider"></i>
      <dl class="coords"><dt>X:</dt><dd>73.15</dd><dt>Y:</dt><dd>−81.56</dd></dl>
      <div class="field zoom"><label for="fz">Z:</label><input id="fz" value="119%"><svg width="11" height="20"><use href="#spin"/></svg></div>
    </div>
    <svg class="taskbar" width="100%" height="8">
      <path d="M18 8l14-4 8-1-4 5z" fill="#e8e4dc"/><path d="M76 8q8-8 18-5l-3 5z" fill="#f2cf32"/><path d="M80 8l6-3 5 3z" fill="#3e8fd0"/>
      <g fill="#b3a797" stroke="#d8cfc0"><path d="M114.500 9V1.500h57V9M176.500 9V1.500h57V9M486.500 9V1.500h57V9M548.500 9V1.500h49V9M662.500 9V1.500h57V9"/></g>
      <path d="M601.500 1v7M605.500 1v7" stroke="#f4eee2"/><path d="M128 8q6-3 16 0z" fill="#c9ad6b"/><path d="M195 8q10-7 20 0z" fill="#d9453c"/><path d="M252 5h30v3h-30z" fill="#078c07"/><path d="M314 8l3-4h24l3 4z" fill="#f04a20"/><path d="M382 8q9-8 18 0z" fill="#6fc6ea"/><path d="M503 8q12-8 24 0z" fill="#7ac04c"/><path d="M568 8q1-4 5-4t5 4z" fill="#fff" stroke="#111"/><path d="M676 8l14-5 15 5z" fill="#e21212"/>
    </svg>
  </footer>
</div>
<script src="app.js"></script>
</body>
</html>
```
FILE: styles.css
```css
* { box-sizing: border-box; }
body { margin: 0; font-family: "Open Sans", "Noto Sans", sans-serif; font-size: 12px; line-height: 16px; color: #000; background: #f0f0f0; }
button { border: 0; padding: 0; background: none; font: inherit; color: inherit; display: flex; align-items: center; justify-content: center; }
input, select { font: inherit; color: inherit; margin: 0; border-radius: 0; }
svg { display: block; flex: none; }
h1, h2, p, dl, dd { margin: 0; font-weight: 400; }
u { text-underline-offset: 2px; }
.defs { position: absolute; width: 0; height: 0; }
.window { min-height: 100vh; display: flex; flex-direction: column; }

.titlebar { height: 23px; background: #deb284; border-bottom: 1px solid #b9936b; display: flex; align-items: center; padding-left: 1px; }
.titlebar h1 { flex: 1; text-align: center; font-size: 14px; line-height: 20px; color: #30261c; padding-left: 80px; }
.winctl { display: flex; align-self: flex-start; height: 19px; }
.winctl button { width: 27px; }
.winctl .close { width: 47px; background: #c75050; }

.menubar { height: 21px; display: flex; align-items: center; gap: 12px; padding: 2px 8px 0; background: #f5f6f7; border-bottom: 1px solid #e4e5e6; }
.menubar a { color: #000; text-decoration: none; }

.toolbar { height: 32px; display: flex; align-items: center; padding-left: 2px; background: #f5f6f7; }
.group { display: flex; }
.group button { width: 26px; height: 26px; }
.sep { width: 1px; height: 18px; margin: 0 5px 0 6px; background: #a9a9ad; }
.sep.tight { margin: 0 6px 0 5px; }
.fields { display: flex; align-items: center; gap: 8px; padding-left: 8px; color: #777; }
.field { display: flex; align-items: center; gap: 1px; }
.field label { width: 13px; }
.field input { width: 44px; height: 21px; border: 2px solid #aeb0b5; border-right-width: 1px; padding: 0 0 0 2px; background: #f0f0f0; color: #777; }
.fields .field:nth-child(2) label { width: 14px; }
.fields .field:nth-child(3) label { width: 17px; }
.fields .field:nth-child(5) label { width: 15px; }
.fields .field:nth-child(5) { padding-left: 3px; }
.lock { width: 14px; height: 20px; }
.select { display: grid; grid-template-columns: 1fr 16px; align-items: center; border: 2px solid #aeb0b5; background: #fff; }
.select select { appearance: none; border: 0; background: #fff; padding: 0 0 0 2px; width: 100%; min-width: 0; height: 100%; }
.arrow { display: flex; height: 100%; align-items: center; justify-content: center; border-left: 2px solid #aeb0b5; background: #f2f2f2; }
.unit { width: 43px; height: 20px; }
.toggles { display: flex; align-self: stretch; margin: 2px 0; }
.toggles button { width: 26px; background: #b7d7fa; border: 1px solid #66a7e8; }

.work { flex: 1; display: flex; min-height: 0; background: #f0f0f0; }
.toolbox { width: 34px; padding: 2px; background: #f5f6f7; display: flex; flex-direction: column; }
.toolbox button { width: 30px; height: 30px; }
.on { background: #b7d7fa; border: 1px solid #66a7e8; }
.toolbox .more, .strip .more { margin-top: auto; height: 22px; }

.editor { flex: 1; min-width: 0; display: grid; grid-template: 15px 1fr 16px / 16px 1fr 15px; }
.editor svg { overflow: hidden; }
.corner { display: flex; align-items: center; justify-content: center; }
.hruler, .vruler, .canvas { width: 100%; height: 100%; min-width: 0; min-height: 0; }
.canvas { background: #fff; }
.tick { stroke: #000; fill: none; shape-rendering: crispEdges; }
.mark { font-size: 8px; line-height: 8px; }
.red { stroke: #f81414; fill: none; }
.vscroll { display: flex; flex-direction: column; align-items: center; padding: 4px 0 5px; }
.vscroll .track { flex: 1; width: 100%; display: flex; flex-direction: column; }
.vscroll b { height: 70px; background: #cdcdcd; }
.vscroll i { flex: 293; }
.vscroll .after { flex: 170; }
.hscroll { display: flex; align-items: center; padding: 0 5px; }
.track { flex: 1; display: flex; align-self: stretch; }
.hscroll b { width: 266px; background: #cdcdcd; }
.hscroll i { flex: 217; }
.hscroll .after { flex: 398; }

.dock { width: 325px; margin: 1px 0 0 7px; border: 2px solid #000; border-width: 1px 0 0 2px; }
.dockhead { display: flex; align-items: center; height: 22px; border-bottom: 1px solid #a0a0a0; padding-right: 2px; }
.dockhead h2 { flex: 1; font-size: 12px; line-height: 16px; }
.dockhead button { width: 22px; height: 20px; }
.dockbody { padding: 5px 6px 7px 5px; border-bottom: 1px solid #fff; }
.tabs { display: flex; align-items: flex-end; padding-left: 2px; height: 24px; }
.tabs button { height: 21px; padding: 0 3px 0 2px; gap: 4px; border: 1px solid #a9a9ad; border-bottom: 0; border-right: 0; }
.tabs button:last-child { border-right: 1px solid #a9a9ad; gap: 3px; }
.tabs .active { height: 25px; margin-bottom: -1px; background: #fff; border-right: 1px solid #a9a9ad; }
.tabs .active + button { border-left: 0; padding-left: 1px; }
.tabs u { text-underline-offset: 3px; }
.panel { height: 251px; background: #fff; border: 1px solid #a9a9ad; padding: 13px 7px; }
.paints { display: flex; gap: 10px; padding: 0 5px; margin-bottom: 13px; }
.panel strong { font-size: 11px; }
.slide { display: flex; align-items: center; gap: 1px; margin-top: 4px; }
.box { flex: 1; height: 24px; border: 1px solid #a9a9ad; border-right: 0; background: #fff; padding: 1px 2px 2px 1px; display: flex; }
.bar { flex: 1; min-width: 0; display: flex; align-items: center; padding: 0 1px 1px 3px; background: #b6c3cd; border: 1px solid #000; border-width: 0 2px 2px 0; }
.bar label { flex: 1; }
.bar input { width: 50px; height: 16px; border: 0; padding: 0; background: transparent; text-align: right; }
.off .bar { color: #777; background: #f0f0f0; border-color: #f0f0f0; }

.strip { width: 30px; padding: 2px; background: #f5f6f7; display: flex; flex-direction: column; align-items: center; }
.strip button { width: 26px; height: 26px; flex: none; }
.strip .rule { width: 16px; height: 1px; margin: 5px 0 6px; background: #aeb0b5; flex: none; }
.commands { margin-left: 2px; }

.bottom { display: flex; flex-direction: column; border-top: 1px solid #8a8a8e; }
.palette { display: flex; align-items: center; height: 17px; border-top: 1px solid #000; padding: 0 2px; border-bottom: 2px solid #fff; }
.palette .none { width: 14px; height: 14px; }
.swatches { flex: 1; min-width: 0; display: flex; overflow: hidden; height: 14px; }
.swatches button { flex: none; width: 14px; height: 14px; }
.palscroll { height: 17px; padding: 2px 13px 1px 4px; display: flex; align-items: center; }
.palscroll .track { padding-left: 5px; }
.palscroll b { width: 295px; background: #cdcdcd; }
.status { height: 28px; display: flex; align-items: center; }
.style { width: 126px; display: grid; grid-template-columns: 70px 1fr; padding-left: 2px; line-height: 14px; }
.small input { width: 36px; }
.divider { width: 1px; align-self: stretch; margin-left: 3px; background: #a9a9ad; }
.status > button { width: 19px; height: 20px; }
.divider + button { margin-left: 1px; }
.layer { width: 65px; height: 27px; margin: 0 1px 0 0; font-weight: 700; }
.status p { flex: 1; white-space: nowrap; overflow: hidden; }
.coords { display: grid; grid-template-columns: 10px 51px; width: 71px; padding-left: 2px; line-height: 14px; }
.coords dd { text-align: right; font-family: "Liberation Mono", monospace; }
.zoom label { width: 11px; }
.zoom input { width: 45px; background: #fff; color: #000; padding-left: 5px; }
.taskbar { background: #96836c; border-top: 1px solid #7b6a55; }
```
FILE: app.js
```js
const NS = "http://www.w3.org/2000/svg";
const STEP = 1.1892;

function add(parent, tag, attrs, text) {
  const node = document.createElementNS(NS, tag);
  for (const key in attrs) node.setAttribute(key, attrs[key]);
  if (text !== undefined) node.textContent = text;
  parent.appendChild(node);
}

// Horizontal ruler: a tick every 5 units, a label every 50.
const h = document.getElementById("hruler");
const rulerWidth = h.getBoundingClientRect().width;
const originX = 289.5;
for (let v = -240; originX + v * STEP < rulerWidth; v += 5) {
  const x = Math.floor(originX + v * STEP) + 0.5;
  const top = v % 50 === 0 ? 3 : v % 10 === 0 ? 9 : 11;
  add(h, "path", { class: "tick", d: `M${x} ${top}V15` });
  if (v % 50 === 0 && x + 18 < rulerWidth) add(h, "text", { class: "mark", x: x + 2, y: 11 }, v);
}
add(h, "text", { class: "mark", x: 1, y: 11 }, "50");
add(h, "path", { class: "tick", d: "M3 14.5H9999" });
add(h, "path", { d: "M75 10h8l-4 4z" });

// Vertical ruler: a tick every 10 units, stacked digits every 100.
const w = document.getElementById("vruler");
const rulerHeight = w.getBoundingClientRect().height;
const originY = 459.5;
for (let v = 380; originY - v * STEP < rulerHeight; v -= 10) {
  const y = Math.floor(originY - v * STEP) + 0.5;
  const left = v % 100 === 0 ? 4 : v % 20 === 0 ? 10 : 12;
  add(w, "path", { class: "tick", d: `M${left} ${y}H16` });
  if (v % 100 === 0) {
    String(v).split("").forEach((c, i) => add(w, "text", { class: "mark", x: 4, y: y + 8 + i * 8 }, c));
  }
}
add(w, "text", { class: "mark", x: 4, y: 8 }, "0");
add(w, "path", { class: "tick", d: "M15.5 0V9999" });
add(w, "path", { d: "M11 552l4 3-4 3z" });

// Drawing: outer plate with a living hinge of alternating cuts.
const c = document.getElementById("canvas");
add(c, "path", { d: "M289.5 0V190", stroke: "#555" });
add(c, "path", { d: "M291 460.500H9999", stroke: "#666", "stroke-width": 3 });
add(c, "rect", { class: "red", x: 289.5, y: 189.5, width: 539, height: 270, "stroke-width": 1.3 });
add(c, "path", { class: "red", d: "M289 459.500H829", "stroke-width": 1.5 });
const outer = [[189, 226], [247, 284], [306, 343], [364, 401], [422, 459]];
const inner = [[207, 257], [269, 320], [332, 379], [391, 441]];
for (let i = 0; i < 13; i++) {
  const x = 504.5 + i * 9;
  for (const [a, b] of i % 2 ? inner : outer) add(c, "path", { class: "red", "stroke-width": 1.3, d: `M${x} ${a}V${b}` });
}

const palette = ("000000 1a1a1a 333333 4d4d4d 666666 808080 999999 b3b3b3 cccccc e6e6e6 ececec f2f2f2 f9f9f9 ffffff " +
  "800000 ff0000 808000 ffff00 008000 00ff00 008080 00ffff 000080 0000ff 800080 ff00ff " +
  "2b0000 550000 800000 aa0000 d40000 ff0000 ff2a2a ff5555 ff8080 ffaaaa ffd5d5 " +
  "280b0b 501616 782121 a02c2c c83737 d35f5f de8787 e9afaf f4d7d7 241c1c 483737 6c5353 916f6f ac9393 c8b7b7 e3dbdb " +
  "2b1100 552200 803300 aa4400 d45500 ff6600 ff7f2a ff9955 ffb380 ffccaa ffe6d5 " +
  "28170b 502d16 784421 a05a2c c87137 d38d5f deaa87 e9c6af f4e3d7 241f1c 483e37 6c5d53 917c6f ac9d93 c8beb7 e3dedb " +
  "2b2200 554400 806600 aa8800 d4aa00 ffcc00 ffd42a ffdd55 ffe680 ffeeaa fff6d5 28220b 504416 786721 a0892c c8ab37").split(" ");
const holder = document.getElementById("swatches");
for (const hex of palette) {
  const b = document.createElement("button");
  b.style.background = "#" + hex;
  b.setAttribute("aria-label", "#" + hex);
  holder.appendChild(b);
}
```
